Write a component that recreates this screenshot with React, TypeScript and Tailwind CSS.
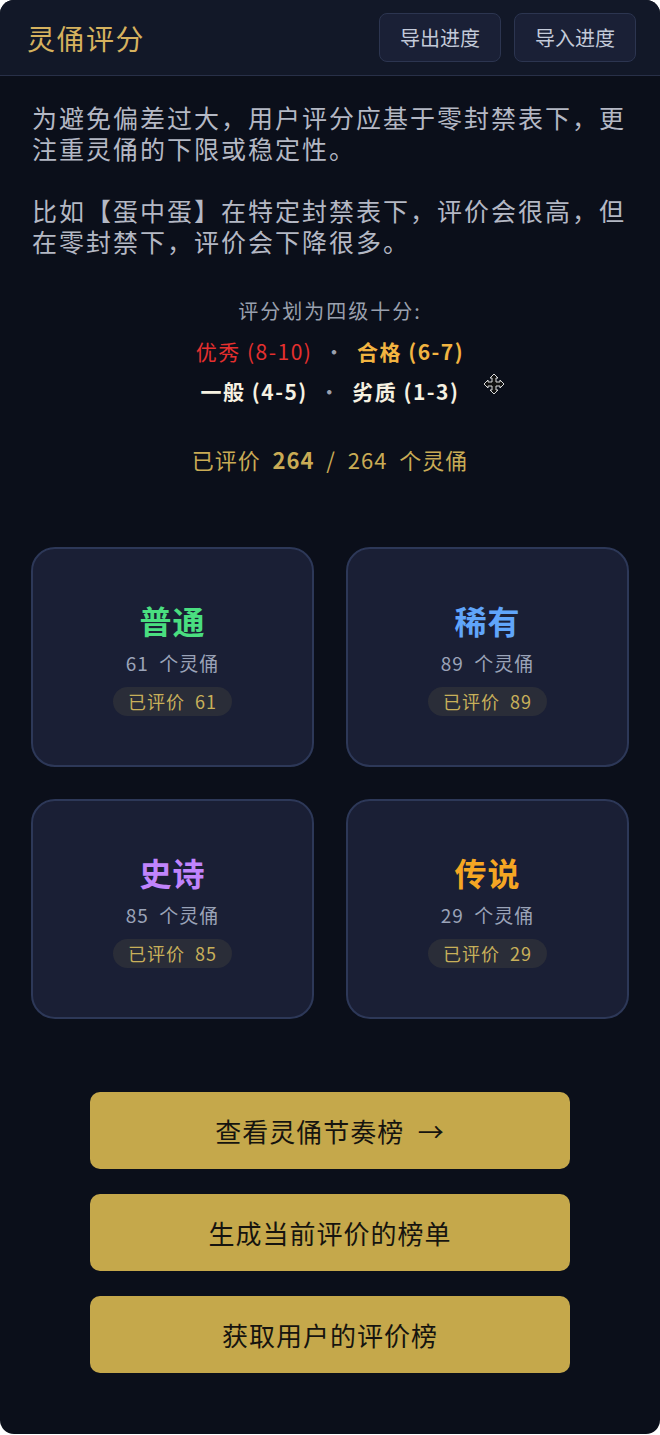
import React from 'react';

const font = { fontFamily: '"Noto Sans CJK SC", "Noto Sans", sans-serif' };

const tiers = [
  { name: '普通', total: 61, rated: 61, color: 'text-[#4ade80]' },
  { name: '稀有', total: 89, rated: 89, color: 'text-[#60a5fa]' },
  { name: '史诗', total: 85, rated: 85, color: 'text-[#c084fc]' },
  { name: '传说', total: 29, rated: 29, color: 'text-[#f5a623]' },
];

function MoveCursor() {
  return (
    <svg width="22" height="22" viewBox="0 0 22 22" className="absolute left-[483px] top-[373px]">
      <path
        d="M11 1 L15 5 L13 5 L13 9 L17 9 L17 7 L21 11 L17 15 L17 13 L13 13 L13 17 L15 17 L11 21 L7 17 L9 17 L9 13 L5 13 L5 15 L1 11 L5 7 L5 9 L9 9 L9 5 L7 5 Z"
        fill="#111"
        stroke="#d8d8d8"
        strokeWidth="1"
      />
    </svg>
  );
}

export default function App() {
  return (
    <div className="bg-white" style={font}>
      <div className="relative rounded-[14px] overflow-hidden bg-[#0b0f1a]">
        {/* Header */}
        <header className="h-[76px] flex items-center justify-between pl-[27px] pr-[24px] bg-[#121828] border-b border-[#283048]">
          <h1 className="text-[28px] text-[#d6b25e] tracking-[1.5px]">灵俑评分</h1>
          <div className="flex gap-[13px]">
            <button className="h-[49px] w-[122px] rounded-lg border border-[#2c3550] bg-[#1a2036] text-[20px] text-[#c3cad9]">
              导出进度
            </button>
            <button className="h-[49px] w-[122px] rounded-lg border border-[#2c3550] bg-[#1a2036] text-[20px] text-[#c3cad9]">
              导入进度
            </button>
          </div>
        </header>

        {/* Intro */}
        <div className="px-[32px] pt-[26px]">
          <p className="text-[25px] leading-[31px] tracking-[2px] text-[#b4b8c4]">
            为避免偏差过大，用户评分应基于零封禁表下，更注重灵俑的下限或稳定性。
          </p>
          <p className="mt-[31px] text-[25px] leading-[31px] tracking-[2px] text-[#b4b8c4]">
            比如【蛋中蛋】在特定封禁表下，评价会很高，但在零封禁下，评价会下降很多。
          </p>
        </div>

        {/* Scale */}
        <div className="mt-[40px] flex flex-col items-center">
          <p className="text-[20px] leading-[28px] tracking-[2px] text-[#9aa0ae]">评分划为四级十分:</p>
          <p className="mt-[12px] text-[21px] leading-[28px] tracking-[1.5px]">
            <span className="text-[#e5302f]">优秀&nbsp;(8-10)</span>
            <span className="text-[#9aa0ae] mx-[11px]">·</span>
            <span className="text-[#f2b441] font-bold">合格&nbsp;(6-7)</span>
          </p>
          <p className="mt-[12px] text-[21px] leading-[28px] tracking-[1.5px] text-[#f6f1e1] font-bold">
            <span>一般&nbsp;(4-5)</span>
            <span className="text-[#9aa0ae] mx-[11px] font-normal">·</span>
            <span>劣质&nbsp;(1-3)</span>
          </p>
          <p className="mt-[40px] text-[22px] leading-[28px] tracking-[1px] text-[#c9ab55]">
            已评价&nbsp;&nbsp;<span className="font-bold">264</span>&nbsp;&nbsp;/&nbsp;&nbsp;264&nbsp;&nbsp;个灵俑
          </p>
        </div>
        <MoveCursor />

        {/* Tier cards */}
        <div className="mt-[74px] px-[31px] grid grid-cols-2 gap-x-[32px] gap-y-[32px]">
          {tiers.map((t) => (
            <div
              key={t.name}
              className="h-[220px] pt-[2px] rounded-[24px] border-2 border-[#2d3858] bg-[#1a1f35] flex flex-col items-center justify-center"
            >
              <h3 className={`text-[32px] leading-[40px] font-bold tracking-[1px] ${t.color}`}>{t.name}</h3>
              <p className="mt-[10px] text-[19px] leading-[26px] tracking-[1px] text-[#9aa3b8]">
                {t.total}&nbsp;&nbsp;个灵俑
              </p>
              <span className="mt-[11px] h-[29px] px-[15px] rounded-full bg-[#2a2d38] text-[18px] leading-[29px] tracking-[1px] text-[#c8b05a]">
                已评价&nbsp;&nbsp;{t.rated}
              </span>
            </div>
          ))}
        </div>

        {/* Actions */}
        <div className="mt-[73px] pb-[61px] flex flex-col items-center gap-[25px]">
          <button className="w-[480px] h-[77px] rounded-[10px] bg-[#c5a84b] text-[26px] tracking-[1px] text-[#16140f]">
            查看灵俑节奏榜&nbsp;&nbsp;→
          </button>
          <button className="w-[480px] h-[77px] rounded-[10px] bg-[#c5a84b] text-[26px] tracking-[1px] text-[#16140f]">
            生成当前评价的榜单
          </button>
          <button className="w-[480px] h-[77px] rounded-[10px] bg-[#c5a84b] text-[26px] tracking-[1px] text-[#16140f]">
            获取用户的评价榜
          </button>
        </div>
      </div>
    </div>
  );
}
